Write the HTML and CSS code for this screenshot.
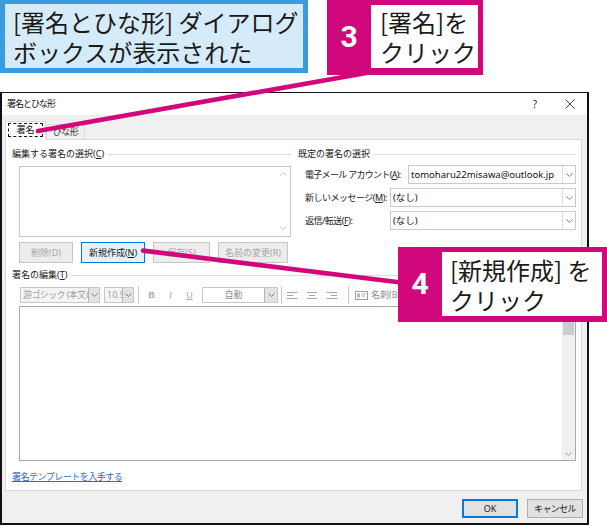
FILE: index.html
```html
<!DOCTYPE html>
<html lang="ja">
<head>
<meta charset="utf-8">
<title>署名とひな形</title>
<link rel="stylesheet" href="styles.css">
</head>
<body>
<div class="page">
  <header class="top">
    <div class="note">[署名とひな形] ダイアログ<br>ボックスが表示された</div>
    <div class="step step3">
      <div class="num">3</div>
      <div class="msg">[署名]を<br>クリック</div>
    </div>
  </header>

  <div class="dialog">
    <div class="titlebar">
      <span class="title">署名とひな形</span>
      <span class="help">?</span>
      <span class="close"><svg width="10" height="10" viewBox="0 0 10 10"><path d="M0.5 0.5L9.5 9.5M9.5 0.5L0.5 9.5" stroke="#444" stroke-width="1" fill="none"/></svg></span>
    </div>
    <div class="body">
      <div class="tabs">
        <div class="tab active"><span class="focus">署名</span></div>
        <div class="tab">ひな形</div>
      </div>
      <div class="panel">
        <div class="cols">
          <section class="col">
            <div class="gtitle"><span>編集する署名の選択(<u>C</u>)</span></div>
            <div class="listbox">
              <div class="lb-scroll">
                <svg width="7" height="4" viewBox="0 0 7 4"><path d="M0.5 3.5L3.5 0.5L6.5 3.5" fill="none" stroke="#c4c4c4"/></svg>
                <svg width="7" height="4" viewBox="0 0 7 4"><path d="M0.5 0.5L3.5 3.5L6.5 0.5" fill="none" stroke="#c4c4c4"/></svg>
              </div>
            </div>
            <div class="btnrow">
              <span class="btn w54"><span>削除(D)</span></span>
              <span class="btn primary w64"><span>新規作成(<u>N</u>)</span></span>
              <span class="btn w57"><span>保存(S)</span></span>
              <span class="btn w70"><span>名前の変更(R)</span></span>
            </div>
          </section>
          <section class="col">
            <div class="gtitle"><span>既定の署名の選択</span></div>
            <div class="fields">
              <div class="field">
                <span class="flabel wide">電子メール アカウント(<u>A</u>):</span>
                <div class="combo"><span class="cv">tomoharu22misawa@outlook.jp</span><span class="dd"><svg width="7" height="4" viewBox="0 0 7 4"><path d="M0.5 0.5L3.5 3.5L6.5 0.5" fill="none" stroke="#8c8c8c"/></svg></span></div>
              </div>
              <div class="field">
                <span class="flabel">新しいメッセージ(<u>M</u>):</span>
                <div class="combo"><span class="cv">(なし)</span><span class="dd"><svg width="7" height="4" viewBox="0 0 7 4"><path d="M0.5 0.5L3.5 3.5L6.5 0.5" fill="none" stroke="#8c8c8c"/></svg></span></div>
              </div>
              <div class="field">
                <span class="flabel">返信/転送(<u>F</u>):</span>
                <div class="combo"><span class="cv">(なし)</span><span class="dd"><svg width="7" height="4" viewBox="0 0 7 4"><path d="M0.5 0.5L3.5 3.5L6.5 0.5" fill="none" stroke="#8c8c8c"/></svg></span></div>
              </div>
            </div>
          </section>
        </div>

        <div class="gtitle edit-title"><span>署名の編集(<u>T</u>)</span></div>
        <div class="toolbar">
          <div class="tcombo font"><span class="tv">游ゴシック (本文のフォント)</span><span class="tdd"><svg width="7" height="4" viewBox="0 0 7 4"><path d="M0.5 0.5L3.5 3.5L6.5 0.5" fill="none" stroke="#7a7a7a"/></svg></span></div>
          <div class="tcombo size"><span class="tv">10.5</span><span class="tdd"><svg width="7" height="4" viewBox="0 0 7 4"><path d="M0.5 0.5L3.5 3.5L6.5 0.5" fill="none" stroke="#7a7a7a"/></svg></span></div>
          <span class="sep"></span>
          <span class="tb bold">B</span>
          <span class="tb ital">I</span>
          <span class="tb und">U</span>
          <div class="tcombo color"><span class="tv">自動</span><span class="tdd"><svg width="7" height="4" viewBox="0 0 7 4"><path d="M0.5 0.5L3.5 3.5L6.5 0.5" fill="none" stroke="#7a7a7a"/></svg></span></div>
          <span class="sep sep2"></span>
          <span class="tb al"><svg width="12" height="9" viewBox="0 0 12 9"><path d="M1 1.5H11M1 4.5H7M1 7.5H11" stroke="#a8a8a8" fill="none"/></svg></span>
          <span class="tb al"><svg width="12" height="9" viewBox="0 0 12 9"><path d="M1 1.5H11M3 4.5H9M1 7.5H11" stroke="#a8a8a8" fill="none"/></svg></span>
          <span class="tb al"><svg width="12" height="9" viewBox="0 0 12 9"><path d="M1 1.5H11M5 4.5H11M1 7.5H11" stroke="#a8a8a8" fill="none"/></svg></span>
          <span class="sep sep3"></span>
          <span class="card"><svg width="13" height="9" viewBox="0 0 13 9"><rect x="0.5" y="0.5" width="12" height="8" fill="#fff" stroke="#a0a0a0"/><rect x="2" y="2.5" width="3" height="4" fill="#b8b8b8"/><path d="M6.5 3H11M6.5 5H10" stroke="#b0b0b0" fill="none"/></svg><span>名刺(B)</span></span>
        </div>
        <div class="editor">
          <div class="edit-area"></div>
          <div class="vscroll">
            <span class="sarrow"><svg width="7" height="4" viewBox="0 0 7 4"><path d="M0.5 3.5L3.5 0.5L6.5 3.5" fill="none" stroke="#a0a0a0"/></svg></span>
            <span class="thumb"></span>
            <span class="track"></span>
            <span class="sarrow"><svg width="7" height="4" viewBox="0 0 7 4"><path d="M0.5 0.5L3.5 3.5L6.5 0.5" fill="none" stroke="#a0a0a0"/></svg></span>
          </div>
        </div>
        <a class="link" href="#">署名テンプレートを入手する</a>
      </div>
      <div class="footer">
        <span class="dbtn ok">OK</span>
        <span class="dbtn kana">キャンセル</span>
      </div>
    </div>
  </div>

  <svg class="leaders" width="607" height="526" viewBox="0 0 607 526">
    <line x1="38" y1="131" x2="400" y2="67" stroke="#d1077c" stroke-width="4.6" stroke-linecap="round"/>
    <line x1="143" y1="250.6" x2="405" y2="283" stroke="#d1077c" stroke-width="4.6" stroke-linecap="round"/>
  </svg>

  <div class="step step4">
    <div class="num">4</div>
    <div class="msg">[新規作成] を<br>クリック</div>
  </div>
</div>
</body>
</html>
```
FILE: styles.css
```css
* { box-sizing: border-box; margin: 0; padding: 0; }

html, body { width: 607px; height: 526px; overflow: hidden; background: #fff; }

body {
  font-family: "Noto Sans", "Noto Sans CJK JP", sans-serif;
  font-size: 9px;
  line-height: 12px;
  color: #1f1f1f;
}

.page { position: relative; width: 607px; height: 526px; }

/* ---------- callouts ---------- */
.top { display: flex; align-items: flex-start; height: 75px; }

.note {
  width: 308px;
  height: 73px;
  border: 5px solid #3a9de1;
  border-top-width: 4px;
  background: #d5ebf9;
  padding: 3px 0 0 8px;
}

.note, .msg {
  font-family: "Noto Sans CJK JP", sans-serif;
  font-size: 24px;
  line-height: 30px;
  color: #1a1a1a;
  white-space: nowrap;
}

.step {
  display: flex;
  background: #d1077c;
  padding: 5px 5px 7px 0;
  height: 75px;
  position: relative;
  z-index: 2;
}

.step3 { margin-left: 19px; width: 156px; }

.num {
  width: 44px;
  display: flex;
  align-items: center;
  justify-content: center;
  color: #fff;
  font-family: Roboto, sans-serif;
  font-weight: 700;
  font-size: 30px;
  line-height: 1;
}

.msg { flex: 1; background: #fff; padding: 2px 0 0 9px; }

.step4 {
  position: absolute;
  left: 398px;
  top: 247px;
  width: 209px;
  padding: 5px 5px 6px 0;
}
.step4 .msg { padding: 3px 0 0 8px; }

.leaders { position: absolute; left: 0; top: 0; z-index: 1; pointer-events: none; }

/* ---------- dialog ---------- */
.dialog {
  margin-top: 17px;
  width: 589px;
  height: 433px;
  border: 2px solid #111;
  border-top-width: 1px;
  background: #f0f0f0;
  display: flex;
  flex-direction: column;
}

.titlebar {
  height: 22px;
  flex: none;
  background: #fff;
  display: flex;
  align-items: center;
  padding: 0 8px 0 5px;
  color: #111;
}
.title { letter-spacing: -1px; }
.help { margin-left: auto; width: 14px; text-align: center; font-size: 10px; color: #333; }
.close { margin-left: 19px; width: 18px; display: flex; justify-content: center; }

.body {
  flex: 1;
  padding: 6px 5px 0 3px;
  display: flex;
  flex-direction: column;
}

.tabs {
  display: flex;
  align-items: flex-end;
  height: 19px;
  margin-bottom: -1px;
  position: relative;
  z-index: 1;
}
.tab {
  height: 15px;
  margin-bottom: 1px;
  width: 39px;
  border: 1px solid #d9d9d9;
  border-bottom: none;
  display: flex;
  align-items: center;
  justify-content: center;
  color: #333;
  letter-spacing: -0.5px;
}
.tab.active {
  width: 41px;
  height: 19px;
  margin-bottom: 0;
  background: #fff;
  padding: 1px 2px 0;
  align-items: flex-start;
  color: #111;
  letter-spacing: 0;
}
.focus {
  width: 100%;
  height: 14px;
  border: 1px dashed #111;
  display: flex;
  align-items: center;
  justify-content: center;
}

.panel {
  height: 352px;
  flex: none;
  background: #fff;
  border: 1px solid #d9d9d9;
  padding: 8px 5px 0 6px;
}

.cols { display: grid; grid-template-columns: 279px 278px; column-gap: 7px; }

.gtitle {
  display: flex;
  align-items: center;
  gap: 4px;
  height: 12px;
  white-space: nowrap;
  color: #222;
}
.gtitle::after { content: ""; flex: 1; height: 1px; background: #dcdcdc; }

.listbox {
  margin: 6px 0 0 7px;
  height: 71px;
  border: 1px solid #c9c9c9;
  display: flex;
  justify-content: flex-end;
}
.lb-scroll {
  width: 14px;
  display: flex;
  flex-direction: column;
  justify-content: space-between;
  align-items: center;
  padding: 5px 0 6px;
}

.btnrow {
  margin: 5px 0 0 7px;
  width: 269px;
  display: flex;
  justify-content: space-between;
}
.btn {
  height: 21px;
  border: 1px solid #c6c6c6;
  background: #ececec;
  color: #a6a6a6;
  display: flex;
  align-items: center;
  justify-content: center;
  white-space: nowrap;
}
.btn.primary { border-color: #0078d7; background: #e5f1fb; color: #1a1a1a; }
.w54 { width: 54px; }
.w57 { width: 57px; }
.w64 { width: 64px; }
.w70 { width: 70px; }

.fields { margin-top: 5px; padding-left: 7px; display: flex; flex-direction: column; gap: 4px; }
.field { display: flex; align-items: center; height: 19px; }
.flabel { width: 85px; flex: none; white-space: nowrap; color: #222; letter-spacing: -0.5px; }
.flabel.wide { width: 103px; letter-spacing: -0.7px; }
.combo {
  flex: 1;
  height: 19px;
  border: 1px solid #cacaca;
  background: #fff;
  display: flex;
  align-items: center;
}
.cv { flex: 1; padding-left: 2px; font-size: 9.5px; color: #111; white-space: nowrap; overflow: hidden; }
.dd {
  width: 13px;
  height: 100%;
  border-left: 1px solid #e0e0e0;
  display: flex;
  align-items: center;
  justify-content: center;
}

/* ---------- editor ---------- */
.edit-title { margin-top: 6px; }

.toolbar {
  margin: 6px 0 0 8px;
  height: 16px;
  display: flex;
  align-items: center;
  color: #a0a0a0;
}
.tcombo {
  height: 16px;
  border: 1px solid #c8c8c8;
  background: #f4f4f4;
  display: flex;
  align-items: center;
  overflow: hidden;
}
.tcombo .tv { flex: 1; padding-left: 2px; white-space: nowrap; overflow: hidden; }
.tcombo.font .tv { letter-spacing: -0.6px; }
.tdd {
  width: 11px;
  flex: none;
  height: 100%;
  background: #e2e2e2;
  border-left: 1px solid #b4b4b4;
  display: flex;
  align-items: center;
  justify-content: center;
}
.tcombo.font { width: 80px; }
.tcombo.size { width: 30px; margin-left: 4px; }
.tcombo.color { width: 76px; margin-left: 3px; background: #fff; }
.tcombo.color .tv { text-align: center; padding-left: 0; color: #8e8e8e; }
.tcombo.color .tdd { width: 13px; }

.sep { width: 1px; height: 18px; background: #c8c8c8; margin: 0 3px 0 4px; }
.sep2 { margin: 0 0 0 3px; }
.sep3 { margin: 0 5px 0 6px; }

.tb { width: 19px; height: 16px; display: flex; align-items: center; justify-content: center; color: #a8a8a8; }
.tb.bold { font-family: "Liberation Sans", sans-serif; font-weight: 700; }
.tb.ital { font-family: "Liberation Serif", serif; font-style: italic; }
.tb.und { font-family: "Liberation Sans", sans-serif; text-decoration: underline; }
.tb.al { width: 20px; }

.card { display: flex; align-items: center; gap: 3px; white-space: nowrap; color: #8c8c8c; margin-left: 1px; }

.editor {
  margin: 3px 0 0 7px;
  height: 155px;
  border: 1px solid #a9a9a9;
  display: flex;
}
.edit-area { flex: 1; background: #fff; }
.vscroll {
  width: 13px;
  background: #f0f0f0;
  display: flex;
  flex-direction: column;
}
.sarrow { height: 12px; display: flex; align-items: center; justify-content: center; }
.thumb { height: 16px; margin: 0 1px; background: #cdcdcd; }
.track { flex: 1; }

.link {
  display: inline-block;
  margin-top: 10px;
  color: #2b6cc4;
  text-decoration: underline;
  letter-spacing: -0.5px;
}

.footer {
  margin: 8px -1px 0 0;
  display: flex;
  justify-content: flex-end;
  gap: 9px;
}
.dbtn {
  width: 56px;
  height: 19px;
  border: 1px solid #adadad;
  background: #e1e1e1;
  display: flex;
  align-items: center;
  justify-content: center;
  color: #1a1a1a;
}
.dbtn.kana { letter-spacing: -0.6px; }
.dbtn.ok { border: 2px solid #0a78d4; }
```
